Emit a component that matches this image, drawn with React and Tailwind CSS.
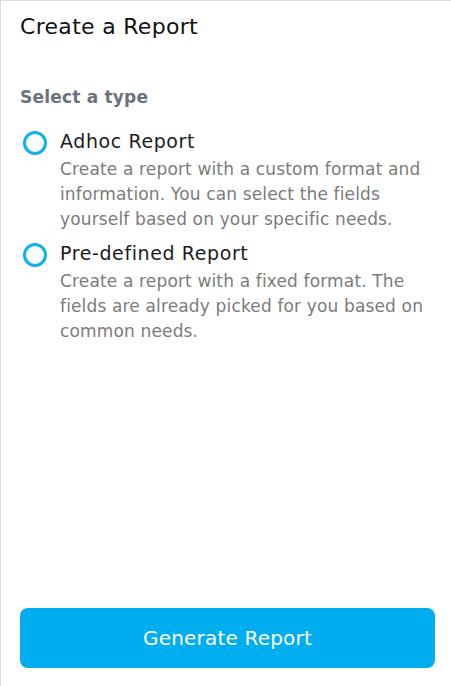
import React, { useState } from "react";

// descriptions are kept as lines so they wrap like the design
const options = [
  {
    id: "adhoc",
    title: "Adhoc Report",
    lines: [
      "Create a report with a custom format and",
      "information. You can select the fields",
      "yourself based on your specific needs.",
    ],
  },
  {
    id: "predefined",
    title: "Pre-defined Report",
    lines: [
      "Create a report with a fixed format. The",
      "fields are already picked for you based on",
      "common needs.",
    ],
  },
];

export default function App() {
  const [selected, setSelected] = useState(null);

  return (
    <div
      className="flex h-[686px] w-[451px] flex-col border-t border-l border-[#dcdcdc] bg-white"
      style={{ fontFamily: '"DejaVu Sans", sans-serif' }}
    >
      {/* Header */}
      <h1 className="pl-[19px] pt-[12px] text-[22px] leading-[28px] tracking-[0.3px] text-[#111]">
        Create a Report
      </h1>

      {/* Options */}
      <div className="mt-[44px] pl-[19px] pr-[16px]">
        <h2 className="text-[17px] font-semibold leading-[24px] tracking-[0.2px] text-[#6b727c]">
          Select a type
        </h2>

        <div className="mt-[19px] flex flex-col gap-[8px]">
          {options.map((o) => (
            <label key={o.id} className="flex cursor-pointer">
              <input
                type="radio"
                name="type"
                className="hidden"
                checked={selected === o.id}
                onChange={() => setSelected(o.id)}
              />
              <span className="ml-[3px] mr-[13px] mt-[3px] flex h-[24px] w-[24px] shrink-0 items-center justify-center rounded-full border-[3px] border-[#10b0ee]">
                {selected === o.id && (
                  <span className="h-[10px] w-[10px] rounded-full bg-[#10b0ee]" />
                )}
              </span>
              <span className="flex flex-col">
                <span className="text-[19px] leading-[26px] tracking-[0.6px] text-[#1c1c1c]">
                  {o.title}
                </span>
                <span className="mt-[3px] text-[17px] leading-[25px] tracking-[0.15px] text-[#7b7b7b]">
                  {o.lines.map((l) => (
                    <span key={l} className="block whitespace-nowrap">
                      {l}
                    </span>
                  ))}
                </span>
              </span>
            </label>
          ))}
        </div>
      </div>

      {/* Footer */}
      <div className="mt-auto pb-[18px] pl-[19px] pr-[16px]">
        <button className="h-[60px] w-full rounded-[8px] bg-[#00aeef] text-[20px] tracking-[0.2px] text-white">
          Generate Report
        </button>
      </div>
    </div>
  );
}
